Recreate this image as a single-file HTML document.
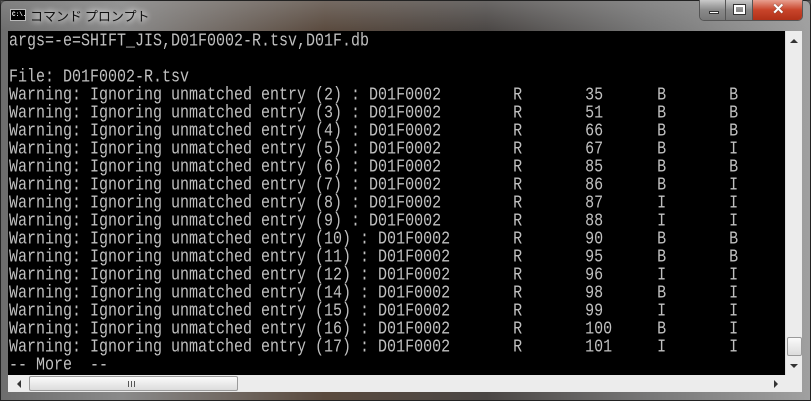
<!DOCTYPE html>
<html><head><meta charset="utf-8"><style>
*{margin:0;padding:0;box-sizing:border-box}
body{width:811px;height:401px;overflow:hidden;position:relative;background:#3a3a3a;font-family:"Liberation Sans","Noto Sans CJK JP",sans-serif}
.frame{position:absolute;left:0;top:0;width:811px;height:401px;border-radius:6px 6px 0 0;border:1px solid #222;
background:linear-gradient(90deg,#6d6d6d 0%,#8a8a8a 15%,#5a4a3e 40%,#4a4644 60%,#777 80%,#a0a0a0 100%)}
.frame:after{content:"";position:absolute;left:0;right:0;top:0;height:30px;background:linear-gradient(#aaa5,#0000)}
.title{position:absolute;left:30px;top:6px;font-size:13px;color:#111;text-shadow:0 0 6px #fff,0 0 8px #fff;font-family:"Noto Sans CJK JP",sans-serif;z-index:2}
.ico{position:absolute;left:10px;top:9px;width:16px;height:12px;background:#000;border:1px solid #bbb;z-index:2;color:#fff;font:bold 6px "Liberation Mono",monospace;line-height:10px;padding-left:1px}
.btns{position:absolute;left:699px;top:0;width:104px;height:21px;border:1px solid #555;border-top:none;border-radius:0 0 5px 5px;overflow:hidden;display:flex;z-index:2}
.b{height:20px;background:linear-gradient(#c9c9c9,#8a8a8a 50%,#777);border-right:1px solid #555;position:relative}
.x{background:linear-gradient(#e8a090,#c8442a 50%,#b03018);border:none}
.con{position:absolute;left:8px;top:31px;width:777px;height:344px;background:#000;overflow:hidden}
.l{position:absolute;left:1px;height:18px;margin-top:2px;white-space:pre;color:#c0c0c0;font-family:"Liberation Mono",monospace;font-size:15px;line-height:18px;transform:scaleY(1.2);transform-origin:0 50%}
.vs{position:absolute;left:785px;top:31px;width:17px;height:344px;background:#ececec;border-left:1px solid #ddd}
.hs{position:absolute;left:8px;top:375px;width:777px;height:17px;background:#ececec}
.cor{position:absolute;left:785px;top:375px;width:17px;height:17px;background:#ececec}
.th{position:absolute;background:linear-gradient(#fafafa,#dcdcdc);border:1px solid #9a9a9a;border-radius:2px}
</style></head><body>
<div class="frame"></div>
<div class="ico">C:\.</div>
<div class="title">コマンド プロンプト</div>
<div class="btns">
<div class="b" style="width:27px"><div style="position:absolute;left:9px;top:11px;width:10px;height:3px;background:#fff;border:1px solid #333"></div></div>
<div class="b" style="width:27px"><div style="position:absolute;left:8px;top:5px;width:11px;height:9px;border:2px solid #fff;outline:1px solid #333"></div></div>
<div class="b x" style="width:50px"><div style="position:absolute;left:19px;top:0;color:#fff;font:bold 15px 'Liberation Sans';text-shadow:0 0 1px #333">✕</div></div>
</div>
<div class="con">
<div class="l" style="top:0">args=-e=SHIFT_JIS,D01F0002-R.tsv,D01F.db</div>
<div class="l" style="top:36px">File: D01F0002-R.tsv</div>
<div class="l" style="top:54px">Warning: Ignoring unmatched entry (2) : D01F0002        R       35      B       B</div>
<div class="l" style="top:72px">Warning: Ignoring unmatched entry (3) : D01F0002        R       51      B       B</div>
<div class="l" style="top:90px">Warning: Ignoring unmatched entry (4) : D01F0002        R       66      B       B</div>
<div class="l" style="top:108px">Warning: Ignoring unmatched entry (5) : D01F0002        R       67      B       I</div>
<div class="l" style="top:126px">Warning: Ignoring unmatched entry (6) : D01F0002        R       85      B       B</div>
<div class="l" style="top:144px">Warning: Ignoring unmatched entry (7) : D01F0002        R       86      B       I</div>
<div class="l" style="top:162px">Warning: Ignoring unmatched entry (8) : D01F0002        R       87      I       I</div>
<div class="l" style="top:180px">Warning: Ignoring unmatched entry (9) : D01F0002        R       88      I       I</div>
<div class="l" style="top:198px">Warning: Ignoring unmatched entry (10) : D01F0002       R       90      B       B</div>
<div class="l" style="top:216px">Warning: Ignoring unmatched entry (11) : D01F0002       R       95      B       B</div>
<div class="l" style="top:234px">Warning: Ignoring unmatched entry (12) : D01F0002       R       96      I       I</div>
<div class="l" style="top:252px">Warning: Ignoring unmatched entry (14) : D01F0002       R       98      B       I</div>
<div class="l" style="top:270px">Warning: Ignoring unmatched entry (15) : D01F0002       R       99      I       I</div>
<div class="l" style="top:288px">Warning: Ignoring unmatched entry (16) : D01F0002       R       100     B       I</div>
<div class="l" style="top:306px">Warning: Ignoring unmatched entry (17) : D01F0002       R       101     I       I</div>
<div class="l" style="top:324px">-- More  --</div>
</div>
<div class="vs">
<div style="position:absolute;left:4px;top:8px;width:0;height:0;border-left:4px solid transparent;border-right:4px solid transparent;border-bottom:4px solid #333"></div>
<div class="th" style="left:1px;top:306px;width:15px;height:19px"></div>
<div style="position:absolute;left:4px;top:333px;width:0;height:0;border-left:4px solid transparent;border-right:4px solid transparent;border-top:4px solid #333"></div>
</div>
<div class="hs">
<div style="position:absolute;left:9px;top:5px;width:0;height:0;border-top:4px solid transparent;border-bottom:4px solid transparent;border-right:4px solid #333"></div>
<div class="th" style="left:21px;top:1px;width:209px;height:15px"><div style="position:absolute;left:98px;top:4px;width:7px;height:6px;border-left:1px solid #555;border-right:1px solid #555"><div style="margin-left:2px;width:1px;height:6px;background:#555"></div></div></div>
<div style="position:absolute;left:766px;top:5px;width:0;height:0;border-top:4px solid transparent;border-bottom:4px solid transparent;border-left:4px solid #333"></div>
</div>
<div class="cor"></div>
</body></html>
